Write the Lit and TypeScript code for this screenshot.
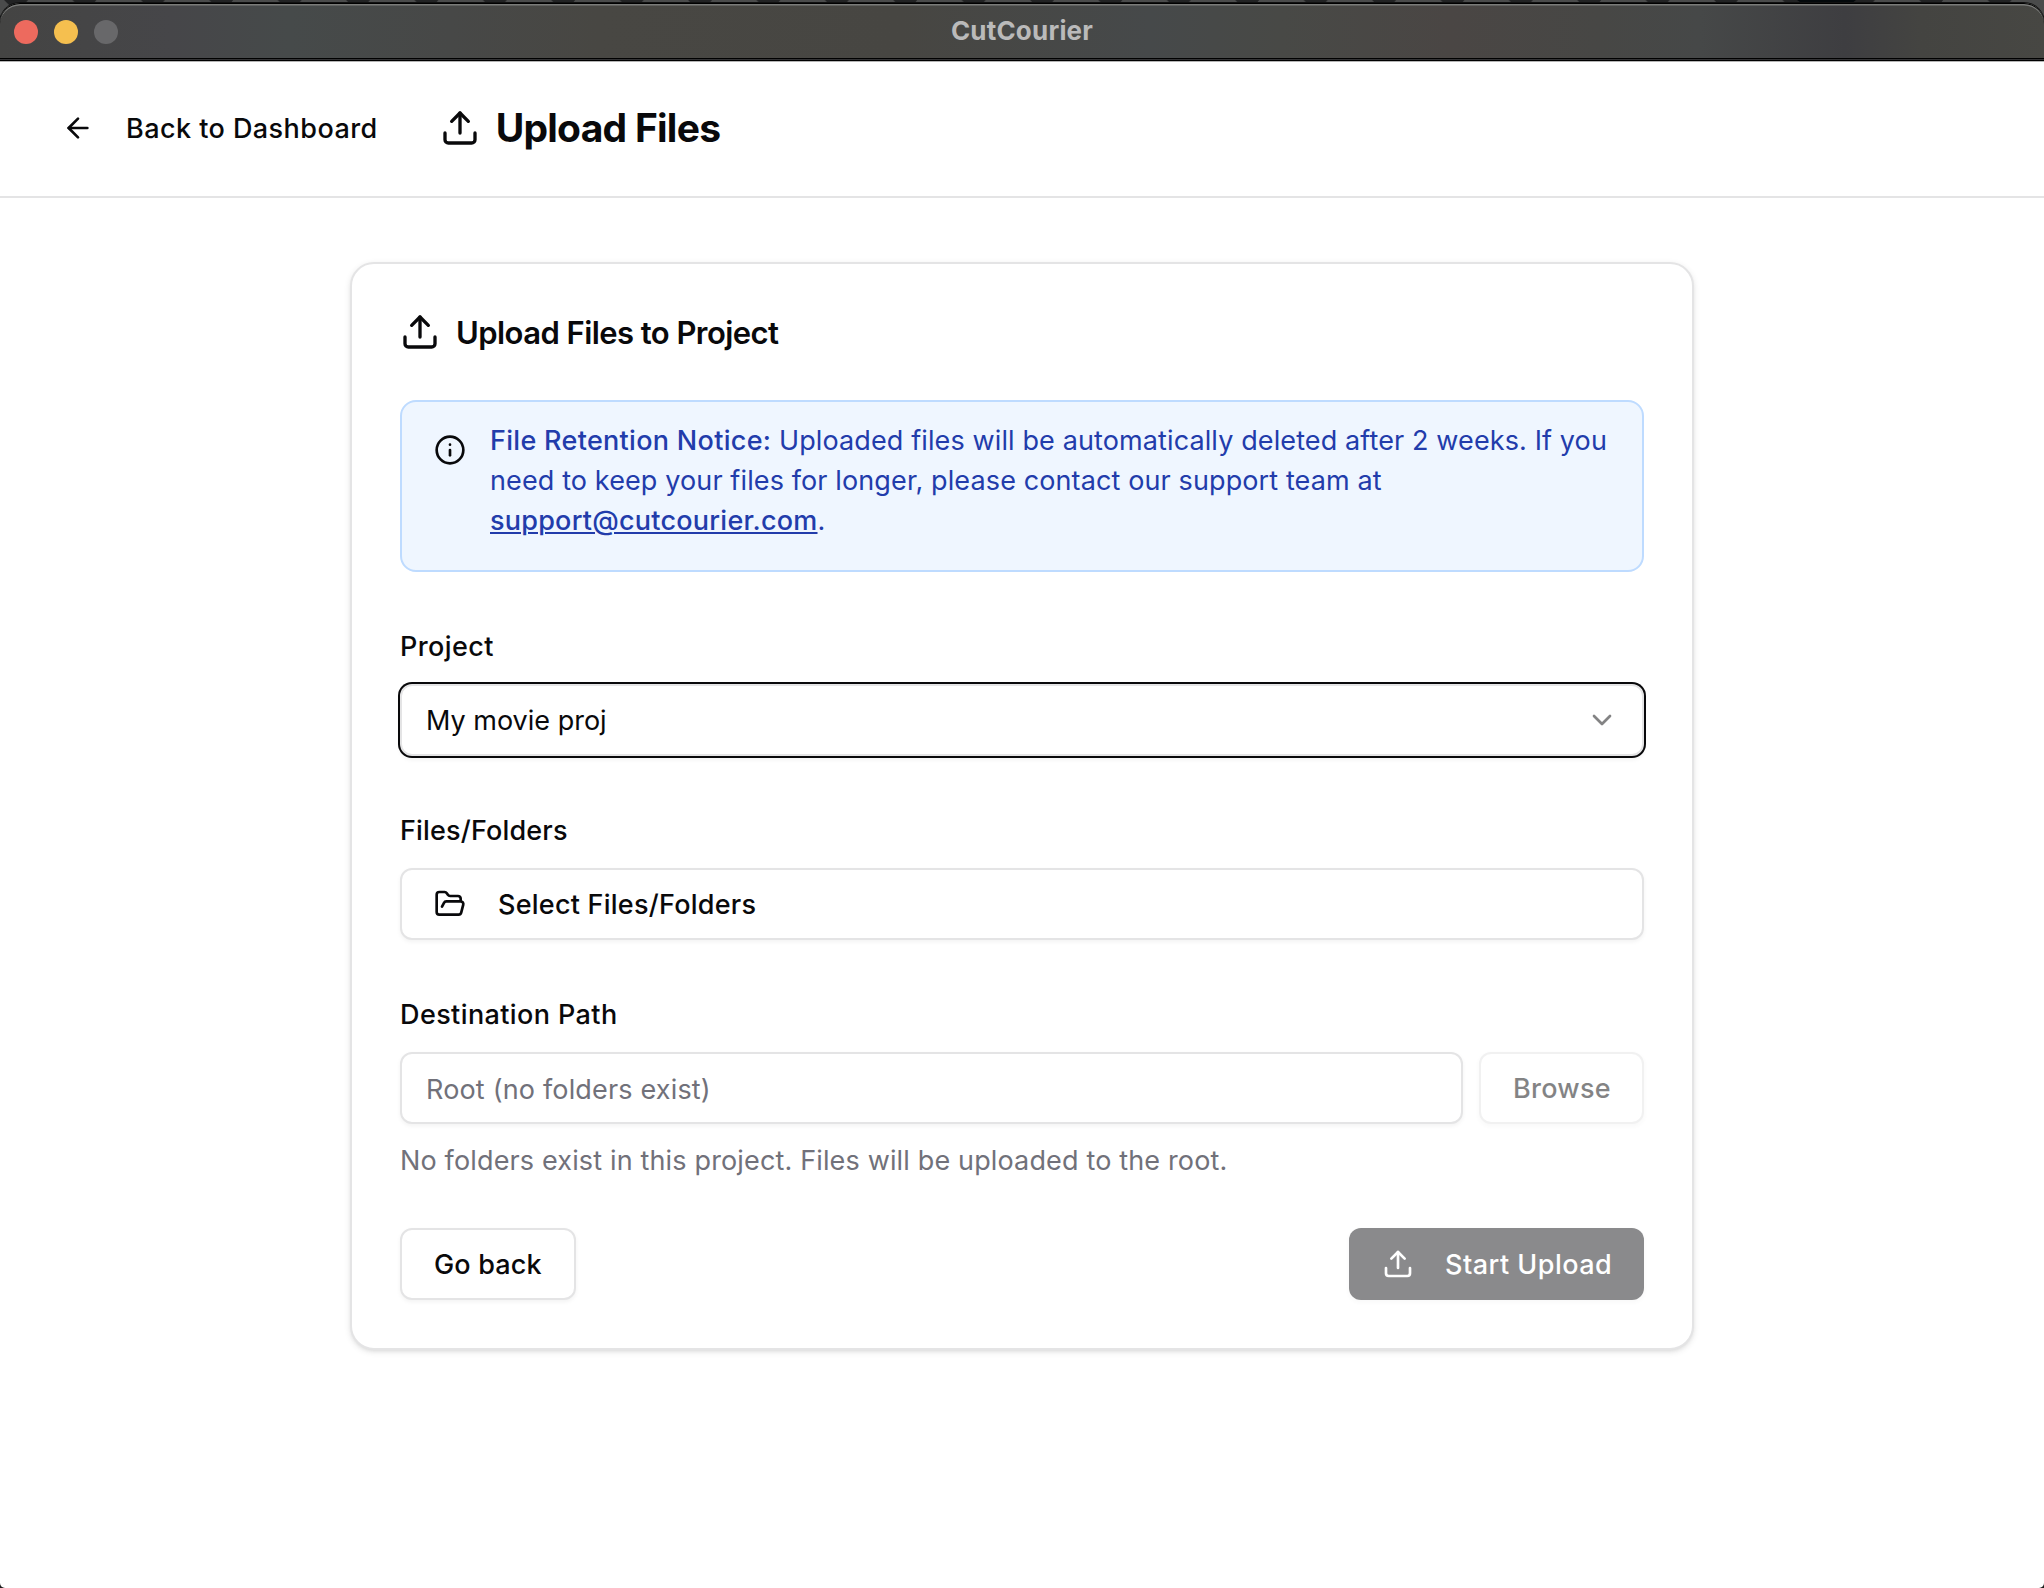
import { LitElement, html, css, svg } from "lit";
import { customElement, property } from "lit/decorators.js";

const ICONS = {
  upload: svg`<path d="M12 3v12" /><path d="m17 8-5-5-5 5" /><path d="M21 15v4a2 2 0 0 1-2 2H5a2 2 0 0 1-2-2v-4" />`,
  "arrow-left": svg`<path d="m12 19-7-7 7-7" /><path d="M19 12H5" />`,
  info: svg`<circle cx="12" cy="12" r="10" /><path d="M12 16v-4" /><path d="M12 8h.01" />`,
  "folder-open": svg`<path d="m6 14 1.5-2.9A2 2 0 0 1 9.24 10H20a2 2 0 0 1 1.94 2.5l-1.54 6a2 2 0 0 1-1.95 1.5H4a2 2 0 0 1-2-2V5a2 2 0 0 1 2-2h3.9a2 2 0 0 1 1.69.9l.81 1.2a2 2 0 0 0 1.67.9H18a2 2 0 0 1 2 2v2" />`,
  "chevron-down": svg`<path d="m6 9 6 6 6-6" />`,
};

@customElement("line-icon")
class LineIcon extends LitElement {
  @property() name: keyof typeof ICONS = "upload";

  static styles = css`
    :host {
      display: block;
      flex: none;
      width: 32px;
      height: 32px;
    }
    svg {
      display: block;
      width: 100%;
      height: 100%;
      fill: none;
      stroke: currentColor;
      stroke-width: 2;
      stroke-linecap: round;
      stroke-linejoin: round;
    }
  `;

  render() {
    return html`<svg viewBox="0 0 24 24" aria-hidden="true">${ICONS[this.name]}</svg>`;
  }
}

@customElement("title-bar")
class TitleBar extends LitElement {
  static styles = css`
    :host {
      display: block;
      height: 62px;
      position: relative;
      background: #4a4b4b;
    }
    .desktop {
      display: block;
      position: absolute;
      inset: 0;
      width: 100%;
      height: 24px;
    }
    .frame {
      position: relative;
      box-sizing: border-box;
      height: 62px;
      padding-top: 3px;
    }
    .bar {
      box-sizing: border-box;
      height: 55px;
      display: grid;
      grid-template-columns: 1fr auto 1fr;
      align-items: center;
      padding: 2px 14px 0;
      border-radius: 20px 20px 0 0;
      box-shadow: inset 0 1px 0 #000, inset 0 3px 0 -0.5px #7b7c7a, 0 0 0 1px #111;
      background: linear-gradient(
        90deg,
        #444443 0,
        #464649 170px,
        #464a4a 290px,
        #474847 450px,
        #484743 600px,
        #474642 900px,
        #46494a 1150px,
        #484946 1280px,
        #4a4644 1450px,
        #474745 1600px,
        #464848 1700px,
        #3e3e41 1845px,
        #444441 1920px,
        #474743 2044px
      );
    }
    .lights {
      display: flex;
      gap: 16px;
    }
    .light {
      width: 24px;
      height: 24px;
      border-radius: 50%;
    }
    .close { background: #ed6a5e; }
    .minimize { background: #f5bf4f; }
    .zoom { background: #68686a; }
    .name {
      padding-bottom: 2px;
      font-weight: 700;
      font-size: 26px;
      line-height: 32px;
      letter-spacing: 0.2px;
      color: #bababa;
    }
    .edge {
      height: 4px;
      background: linear-gradient(#000 0 1px, #333335 1px 2px, #000 2px 3px, #b5b5b5 3px 4px);
    }
  `;

  render() {
    return html`
      <svg class="desktop" aria-hidden="true">
        <defs>
          <pattern id="hex" width="68.4" height="24" patternUnits="userSpaceOnUse">
            <path d="M4 0H28L24 5H9Z" fill="#222324" />
          </pattern>
        </defs>
        <rect width="100%" height="24" fill="url(#hex)" />
        <path d="M1797 0H1856L1851 4H1803Z" fill="#04090c" />
      </svg>
      <div class="frame">
        <div class="bar">
          <div class="lights">
            <span class="light close"></span>
            <span class="light minimize"></span>
            <span class="light zoom"></span>
          </div>
          <span class="name">CutCourier</span>
        </div>
        <div class="edge"></div>
      </div>
    `;
  }
}

@customElement("app-root")
class AppRoot extends LitElement {
  static styles = css`
    :host {
      display: block;
      height: 1588px;
      overflow: hidden;
      background: #1c1c1c;
      color: #09090b;
      font: 400 27px/40px Inter, "Liberation Sans", sans-serif;
    }
    .window {
      display: flex;
      flex-direction: column;
      height: 100%;
      background: #fff;
      border-radius: 0 0 5px 5px;
    }
    .header {
      display: flex;
      align-items: center;
      gap: 62px;
      height: 72px;
      padding: 30px 62px 32px;
      border-bottom: 2px solid #e4e4e5;
    }
    .back {
      display: flex;
      align-items: center;
      gap: 32px;
      font-weight: 500;
      letter-spacing: 0.44px;
    }
    .back span,
    .control span {
      padding-top: 2px;
    }
    .title {
      display: flex;
      align-items: center;
      gap: 16px;
    }
    .title line-icon,
    .card-title line-icon {
      width: 40px;
      height: 40px;
    }
    h1 {
      margin: 0;
      font-size: 39px;
      line-height: 56px;
      font-weight: 700;
      letter-spacing: -0.75px;
    }
    .card {
      box-sizing: border-box;
      width: 1344px;
      margin: 64px auto 0;
      padding: 48px;
      border: 2px solid #e4e4e5;
      border-radius: 24px;
      background: #fff;
      box-shadow: 0 2px 6px rgba(0, 0, 0, 0.1), 0 2px 4px -2px rgba(0, 0, 0, 0.1);
    }
    .card-title {
      display: flex;
      align-items: center;
      gap: 16px;
      height: 40px;
      margin-bottom: 48px;
    }
    h2 {
      margin: 0;
      padding-top: 2px;
      font-size: 31px;
      line-height: 40px;
      font-weight: 600;
      letter-spacing: -0.56px;
    }
    .notice {
      display: flex;
      gap: 24px;
      box-sizing: border-box;
      height: 172px;
      padding: 19px 20px 0 32px;
      border: 2px solid #bedbff;
      border-radius: 16px;
      background: #eff6ff;
    }
    .notice line-icon {
      margin-top: 13px;
    }
    .notice p {
      margin: 0;
      color: #223cab;
      letter-spacing: 0.115px;
    }
    .notice strong {
      font-weight: 500;
      letter-spacing: 0.3px;
    }
    .notice a {
      color: inherit;
      font-weight: 500;
      letter-spacing: 0.24px;
      text-decoration: underline;
      text-decoration-thickness: 2px;
      text-underline-offset: 2px;
    }
    .field {
      margin-top: 60px;
    }
    .label {
      display: block;
      padding-top: 1px;
      margin-bottom: 23px;
      line-height: 28px;
      font-weight: 500;
      letter-spacing: 0.4px;
    }
    .label.tight {
      letter-spacing: 0.17px;
    }
    .control {
      box-sizing: border-box;
      display: flex;
      align-items: center;
      height: 72px;
      border: 2px solid #e4e4e5;
      border-radius: 12px;
      background: #fff;
      box-shadow: 0 2px 4px rgba(0, 0, 0, 0.05);
    }
    .select {
      justify-content: space-between;
      padding: 0 24px;
      letter-spacing: 0;
      box-shadow: 0 0 0 2px #09090b, 0 4px 4px rgba(0, 0, 0, 0.05);
    }
    .select line-icon {
      opacity: 0.5;
    }
    .button {
      padding: 0 32px;
      font-weight: 500;
      white-space: nowrap;
    }
    .picker {
      gap: 32px;
      letter-spacing: 0.24px;
    }
    .path {
      display: flex;
      gap: 16px;
    }
    .input {
      flex: 1;
      padding: 2px 24px 0;
      color: #71717a;
      letter-spacing: 0.17px;
    }
    .browse {
      width: 165px;
      letter-spacing: 0.25px;
      opacity: 0.5;
    }
    .hint {
      margin: 17px 0 0;
      color: #71717a;
      letter-spacing: 0.15px;
    }
    .actions {
      display: flex;
      justify-content: space-between;
      margin-top: 47px;
    }
    .go-back {
      width: 176px;
      letter-spacing: 0.16px;
    }
    .start {
      width: 295px;
      padding-left: 31px;
      gap: 31px;
      border-color: transparent;
      background: #18181b;
      background-clip: border-box;
      background-origin: border-box;
      color: #fff;
      letter-spacing: 0.48px;
      opacity: 0.5;
    }
  `;

  render() {
    return html`
      <div class="window">
        <title-bar></title-bar>
        <header class="header">
          <div class="back"><line-icon name="arrow-left"></line-icon><span>Back to Dashboard</span></div>
          <div class="title"><line-icon name="upload"></line-icon><h1>Upload Files</h1></div>
        </header>
        <main class="card">
          <div class="card-title"><line-icon name="upload"></line-icon><h2>Upload Files to Project</h2></div>
          <div class="notice">
            <line-icon name="info"></line-icon>
            <p>
              <strong>File Retention Notice:</strong> Uploaded files will be automatically deleted after 2 weeks. If you
              need to keep your files for longer, please contact our support team at
              <a>support@cutcourier.com</a>.
            </p>
          </div>
          <div class="field">
            <span class="label">Project</span>
            <div class="control select"><span>My movie proj</span><line-icon name="chevron-down"></line-icon></div>
          </div>
          <div class="field">
            <span class="label tight">Files/Folders</span>
            <div class="control button picker">
              <line-icon name="folder-open"></line-icon><span>Select Files/Folders</span>
            </div>
          </div>
          <div class="field">
            <span class="label">Destination Path</span>
            <div class="path">
              <div class="control input"><span>Root (no folders exist)</span></div>
              <div class="control button browse"><span>Browse</span></div>
            </div>
            <p class="hint">No folders exist in this project. Files will be uploaded to the root.</p>
          </div>
          <div class="actions">
            <div class="control button go-back"><span>Go back</span></div>
            <div class="control button start"><line-icon name="upload"></line-icon><span>Start Upload</span></div>
          </div>
        </main>
      </div>
    `;
  }
}
